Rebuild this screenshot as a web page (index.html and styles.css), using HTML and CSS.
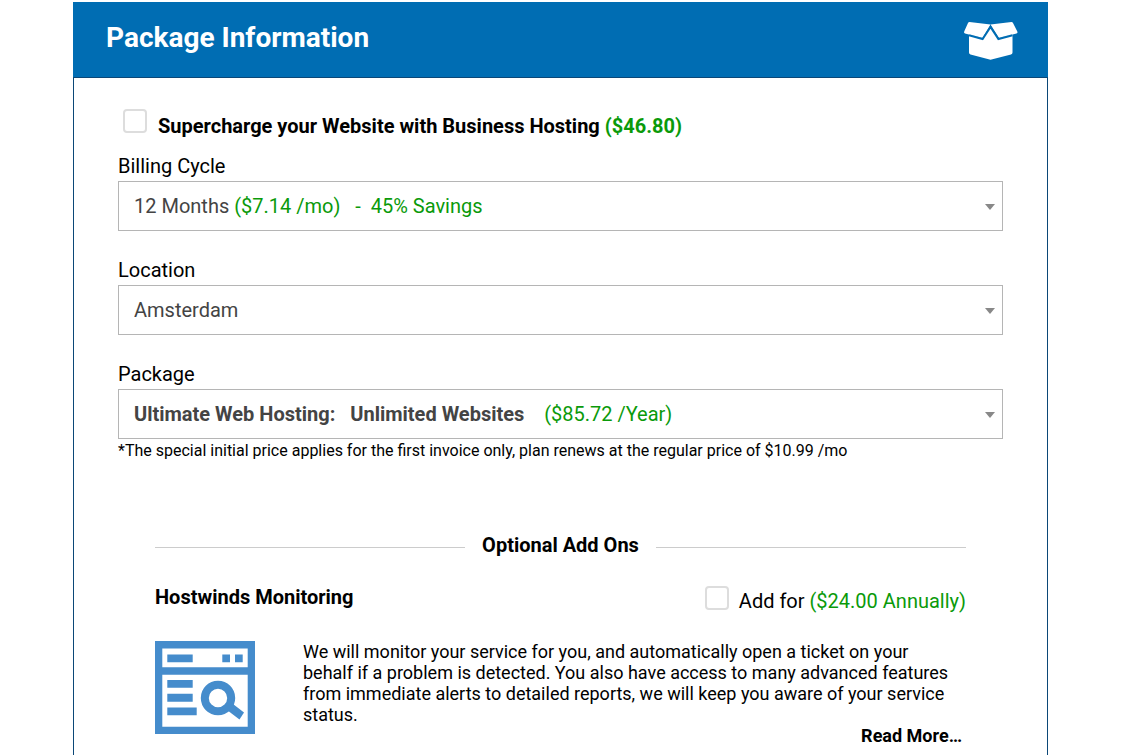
FILE: index.html
```html
<!DOCTYPE html>
<html lang="en">
<head>
<meta charset="utf-8">
<meta name="viewport" content="width=device-width, initial-scale=1">
<title>Package Information</title>
<link rel="stylesheet" href="styles.css">
</head>
<body>
<main class="panel">
  <header class="panel-header">
    <h1 class="panel-title">Package Information</h1>
    <svg class="box-icon" viewBox="0 0 56 40" aria-hidden="true">
      <path d="M6 14 L19.600 18.300 L27.500 7 L35 18.300 L49.500 14 V32.500 Q49.500 34 48 34.500 L27.500 39.800 L7.500 34.500 Q6 34 6 32.500 Z"/>
      <path d="M6.500 2 L27.500 4.500 L19.500 18 L2 13.500 Q.5 13 1.200 11.500 L5 3 Q5.500 2 6.500 2 Z"/>
      <path d="M48.500 2 L27.500 4.500 L36 18 L53.500 13.500 Q55 13 54.300 11.500 L50 3 Q49.500 2 48.500 2 Z"/>
      <path class="seam" d="M6 15.200 L19.600 19 L27.500 7 L35.400 19 L49.500 15.200"/>
    </svg>
  </header>

  <form class="panel-body">
    <label class="upgrade">
      <input class="check" type="checkbox" name="business">
      <span class="upgrade-text">Supercharge your Website with Business Hosting <span class="price">($46.80)</span></span>
    </label>

    <div class="field">
      <label class="field-label" for="cycle">Billing Cycle</label>
      <div class="select-wrap">
        <select class="select select-rich" id="cycle" name="cycle">
          <option>12 Months ($7.14 /mo) - 45% Savings</option>
        </select>
        <span class="select-value" aria-hidden="true">12 Months <span class="price">($7.14 /mo) &nbsp; - &nbsp;45% Savings</span></span>
      </div>
    </div>

    <div class="field">
      <label class="field-label" for="location">Location</label>
      <div class="select-wrap">
        <select class="select" id="location" name="location">
          <option>Amsterdam</option>
        </select>
      </div>
    </div>

    <div class="field">
      <label class="field-label" for="package">Package</label>
      <div class="select-wrap">
        <select class="select select-rich" id="package" name="package">
          <option>Ultimate Web Hosting: Unlimited Websites ($85.72 /Year)</option>
        </select>
        <span class="select-value" aria-hidden="true"><b>Ultimate Web Hosting: &nbsp; Unlimited Websites</b> &nbsp; &nbsp;<span class="price">($85.72 /Year)</span></span>
      </div>
      <p class="note">*The special initial price applies for the first invoice only, plan renews at the regular price of $10.99 /mo</p>
    </div>

    <section class="addons">
      <h2 class="addons-title">Optional Add Ons</h2>
      <div class="addon-head">
        <h3 class="addon-name">Hostwinds Monitoring</h3>
        <label class="addon-toggle">
          <input class="check" type="checkbox" name="monitoring">
          <span class="addon-price">Add for <span class="price">($24.00 Annually)</span></span>
        </label>
      </div>
      <div class="addon-body">
        <svg class="addon-icon" viewBox="0 0 100 93" aria-hidden="true">
          <path fill-rule="evenodd" d="M0 0H100V93H0Z M7.300 7.500V26.200H92.700V7.500Z M7.300 33.700V85.700H92.700V33.700Z"/>
          <path d="M12.300 13.500H37.700V21.300H12.300Z M67.300 13.500H75V21.300H67.300Z M80 13.500H87.700V21.300H80Z M12.300 39H37.700V46.700H12.300Z M12.300 52.800H37.700V60.700H12.300Z M12.300 66.500H41.700V74.300H12.300Z"/>
          <circle class="lens" cx="63" cy="57" r="13.200"/>
          <path d="M72 69 L78 63 L89 71.500 L84.500 78.500 Z"/>
        </svg>
        <div class="addon-copy">
          <p class="addon-text">We will monitor your service for you, and automatically open a ticket on your behalf if a problem is detected. You also have access to many advanced features from immediate alerts to detailed reports, we will keep you aware of your service status.</p>
          <a class="more" href="#more">Read More…</a>
        </div>
      </div>
    </section>
  </form>
</main>
</body>
</html>
```
FILE: styles.css
```css
* {
  box-sizing: border-box;
}

body {
  margin: 0;
  padding: 2px 76px 0 73px;
  background: #fff;
  color: #000;
  font: 20px/24px Roboto, "Liberation Sans", sans-serif;
}

h1, h2, h3, p {
  margin: 0;
}

.panel {
  min-height: calc(100vh - 2px);
  border: 1px solid #0b4777;
  border-width: 0 1px;
  background: #fff;
}

.panel-header {
  display: flex;
  align-items: flex-start;
  justify-content: space-between;
  height: 76px;
  margin: 0 -1px;
  padding: 18px 29px 0 33px;
  border-bottom: 1px solid #0b4777;
  background: #006db3;
}

.panel-title {
  color: #fff;
  font-size: 28px;
  line-height: 36px;
  font-weight: 700;
}

.box-icon {
  width: 56px;
  height: 40px;
  fill: #fff;
}

.box-icon .seam {
  fill: none;
  stroke: #006db3;
  stroke-width: 2;
}

.panel-body {
  padding: 31px 44px 0;
}

.price {
  color: #0a9a0a;
}

.check {
  appearance: none;
  flex: none;
  width: 24px;
  height: 24px;
  margin: 0;
  border: 2px solid #ddd;
  border-radius: 4px;
  background: #fff;
}

.check:checked {
  background: #006db3;
}

.upgrade {
  display: flex;
  gap: 11px;
  padding-left: 5px;
  font-weight: 700;
}

.upgrade-text {
  padding-top: 5px;
}

.field {
  margin-bottom: 27px;
}

.upgrade + .field {
  margin-top: 16px;
}

.field-label {
  display: block;
  height: 27px;
}

.select-wrap {
  position: relative;
  color: #444;
}

.select-wrap::after {
  content: "";
  position: absolute;
  top: 23px;
  right: 8px;
  border: 5px solid transparent;
  border-top: 6px solid #888;
  border-bottom: 0;
  pointer-events: none;
}

.select {
  appearance: none;
  display: block;
  width: 100%;
  height: 50px;
  padding: 0 28px 0 15px;
  border: 1px solid #b5b5b5;
  border-radius: 0;
  background: #fff;
  color: #444;
  font: inherit;
}

.select-rich {
  color: transparent;
}

.select-rich option {
  color: #444;
}

.select-value {
  position: absolute;
  top: 13px;
  left: 16px;
  right: 28px;
  overflow: hidden;
  white-space: nowrap;
  pointer-events: none;
}

.note {
  font-size: 16px;
}

.addons {
  padding: 43px 37px 0;
}

.addons-title {
  display: flex;
  align-items: center;
  gap: 17px;
  font-size: 20px;
  font-weight: 700;
}

.addons-title::before,
.addons-title::after {
  content: "";
  flex: 1;
  height: 1px;
  margin-top: 4px;
  background: #ccc;
}

.addon-head {
  display: flex;
  justify-content: space-between;
  margin-top: 28px;
}

.addon-name {
  font-size: 20px;
  font-weight: 700;
}

.addon-toggle {
  display: flex;
  gap: 10px;
  padding-top: 1px;
}

.addon-price {
  padding-top: 3px;
}

.addon-body {
  display: flex;
  gap: 48px;
  margin-top: 28px;
  font-size: 18px;
  line-height: 21px;
}

.addon-icon {
  flex: none;
  width: 100px;
  height: 93px;
  fill: #458ccc;
}

.addon-icon .lens {
  fill: none;
  stroke: #458ccc;
  stroke-width: 8;
}

.addon-copy {
  flex: 1;
  display: flex;
  flex-direction: column;
}

.addon-text {
  padding-right: 12px;
}

.more {
  align-self: flex-end;
  margin-right: 4px;
  color: #000;
  font-weight: 700;
  text-decoration: none;
}
```
